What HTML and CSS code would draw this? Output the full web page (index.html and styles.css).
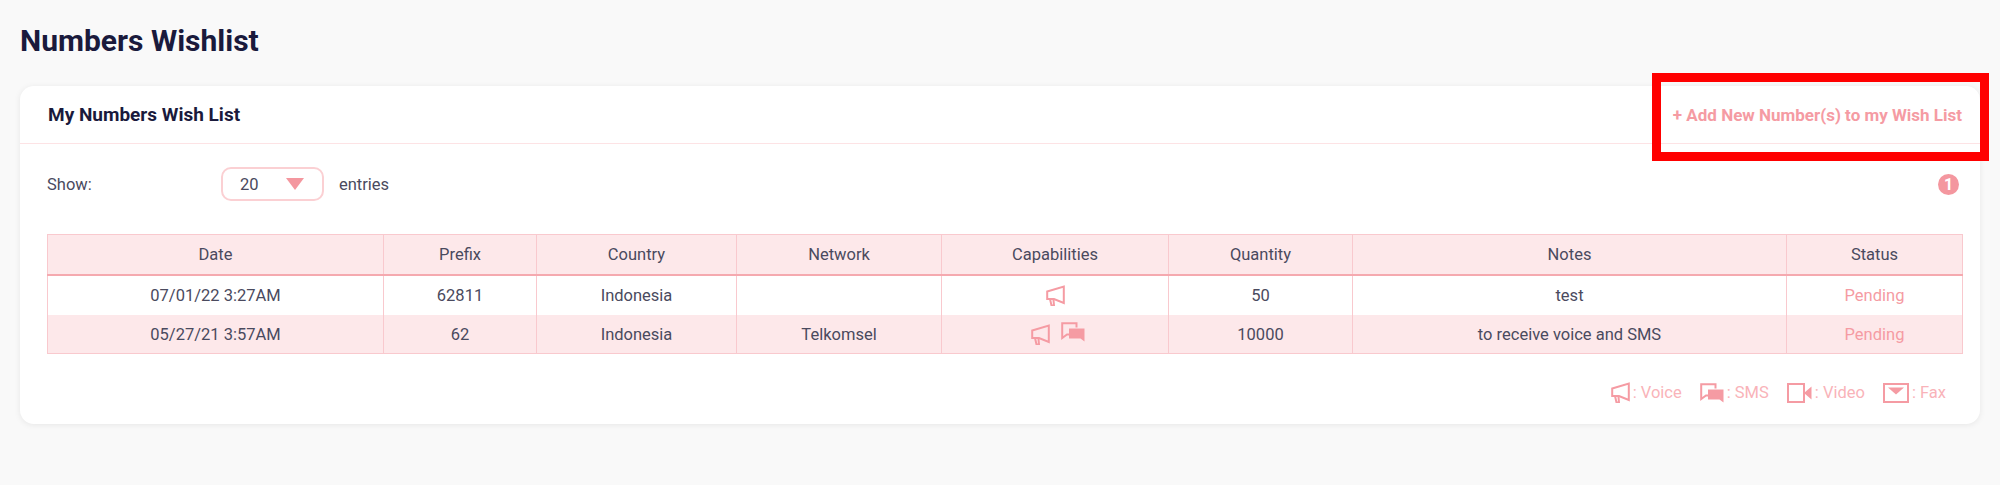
FILE: index.html
```html
<!DOCTYPE html>
<html lang="en">
<head>
  <meta charset="UTF-8" />
  <title>Numbers Wishlist</title>
  <link rel="stylesheet" href="styles.css">
</head>
<body>
  <svg class="icon-defs" width="0" height="0">
    <symbol id="i-voice" viewBox="0 0 19 21">
      <path d="M1.2 6.5 L17.8 1.5 V18 L8 14 H1.2 Z" fill="none" stroke="currentColor" stroke-width="2"/>
      <path d="M4 14 L5.5 20.5 H8 L7.5 15" fill="none" stroke="currentColor" stroke-width="2"/>
    </symbol>
    <symbol id="i-sms" viewBox="0 0 24 20">
      <path d="M15.5 5.5 V1.2 H1.2 V16 L6 12.5 H8" fill="none" stroke="currentColor" stroke-width="2"/>
      <path d="M8 6.5 H23.5 V19.5 L19.5 16.5 H8 Z" fill="currentColor"/>
    </symbol>
    <symbol id="i-video" viewBox="0 0 25 20">
      <rect x="1" y="1" width="16" height="18" fill="none" stroke="currentColor" stroke-width="2"/>
      <path d="M17 10 L24.5 3.5 V16.5 Z" fill="currentColor"/>
    </symbol>
    <symbol id="i-fax" viewBox="0 0 26 20">
      <rect x="1" y="1" width="24" height="18" fill="none" stroke="currentColor" stroke-width="2"/>
      <path d="M5 4.5 H21 L13 11.5 Z" fill="currentColor"/>
    </symbol>
  </svg>

  <h1 class="page-title">Numbers Wishlist</h1>

  <div class="card">
    <div class="card-head">
      <h2>My Numbers Wish List</h2>
      <a class="add-link" href="#">+ Add New Number(s) to my Wish List</a>
    </div>

    <div class="card-body">
      <div class="toolbar">
        <span class="show-label">Show:</span>
        <div class="select"><span>20</span><i class="caret"></i></div>
        <span class="entries">entries</span>
        <span class="page-badge">1</span>
      </div>

      <table class="wish-table">
        <colgroup>
          <col class="c-date"><col class="c-prefix"><col class="c-country"><col class="c-network">
          <col class="c-caps"><col class="c-qty"><col class="c-notes"><col class="c-status">
        </colgroup>
        <thead>
          <tr>
            <th>Date</th><th>Prefix</th><th>Country</th><th>Network</th>
            <th>Capabilities</th><th>Quantity</th><th>Notes</th><th>Status</th>
          </tr>
        </thead>
        <tbody>
          <tr>
            <td>07/01/22 3:27AM</td><td>62811</td><td>Indonesia</td><td></td>
            <td class="caps"><svg class="ic ic-voice"><use href="#i-voice"/></svg></td>
            <td>50</td><td>test</td><td class="status">Pending</td>
          </tr>
          <tr>
            <td>05/27/21 3:57AM</td><td>62</td><td>Indonesia</td><td>Telkomsel</td>
            <td class="caps"><svg class="ic ic-voice"><use href="#i-voice"/></svg><svg class="ic ic-sms"><use href="#i-sms"/></svg></td>
            <td>10000</td><td>to receive voice and SMS</td><td class="status">Pending</td>
          </tr>
        </tbody>
      </table>

      <div class="legend">
        <span class="legend-item"><svg class="ic ic-voice"><use href="#i-voice"/></svg>: Voice</span>
        <span class="legend-item"><svg class="ic ic-sms"><use href="#i-sms"/></svg>: SMS</span>
        <span class="legend-item"><svg class="ic ic-video"><use href="#i-video"/></svg>: Video</span>
        <span class="legend-item"><svg class="ic ic-fax"><use href="#i-fax"/></svg>: Fax</span>
      </div>
    </div>

    <div class="highlight"></div>
  </div>
</body>
</html>
```

FILE: styles.css
```css
body {
  margin: 0;
  height: 485px;
  overflow: hidden;
  background: #f9f9f9;
  font-family: Roboto, 'Noto Sans', sans-serif;
  font-size: 16.5px;
  color: #4a4a5e;
}

.icon-defs {
  position: absolute;
}

.page-title {
  margin: 0;
  padding: 23px 20px 0;
  height: 64px;
  box-sizing: border-box;
  font-size: 30px;
  line-height: 36px;
  font-weight: 700;
  color: #1a1a3c;
}

.card {
  position: relative;
  margin: 22px 20px 0;
  height: 338px;
  background: #fff;
  border-radius: 14px;
  box-shadow: 0 1px 6px rgba(0, 0, 0, 0.08);
}

.card-head {
  height: 58px;
  box-sizing: border-box;
  padding: 0 18px 0 28px;
  display: flex;
  align-items: center;
  justify-content: space-between;
  border-bottom: 1px solid #fde3e5;
}

.card-head h2 {
  margin: 0;
  font-size: 19px;
  font-weight: 700;
  color: #1a1a3c;
}

.add-link {
  font-size: 17px;
  font-weight: 700;
  color: #f59ba3;
  text-decoration: none;
}

.card-body {
  padding: 23px 17px 0 27px;
}

.toolbar {
  height: 34px;
  display: flex;
  align-items: center;
}

.show-label {
  width: 174px;
}

.select {
  width: 103px;
  height: 34px;
  box-sizing: border-box;
  padding: 0 18px 0 17px;
  display: flex;
  align-items: center;
  justify-content: space-between;
  border: 2px solid #fbd0d3;
  border-radius: 10px;
}

.caret {
  width: 0;
  height: 0;
  border-left: 9px solid transparent;
  border-right: 9px solid transparent;
  border-top: 12px solid #f4979f;
}

.entries {
  margin-left: 15px;
}

.page-badge {
  margin-left: auto;
  margin-right: 4px;
  width: 21px;
  height: 21px;
  border-radius: 50%;
  background: #f4979f;
  color: #fff;
  font-size: 16px;
  font-weight: 700;
  line-height: 21px;
  text-align: center;
}

.wish-table {
  margin-top: 33px;
  width: 1915px;
  table-layout: fixed;
  border-collapse: collapse;
  text-align: center;
}

.c-date { width: 336px; }
.c-prefix { width: 153px; }
.c-country { width: 200px; }
.c-network { width: 205px; }
.c-caps { width: 227px; }
.c-qty { width: 184px; }
.c-notes { width: 434px; }
.c-status { width: 176px; }

.wish-table th,
.wish-table td {
  border: 1px solid #f9c9ce;
  font-weight: 400;
  padding: 0;
}

.wish-table th {
  height: 39px;
  background: #fde8ea;
  border-bottom: 2px solid #f5a9af;
}

.wish-table td {
  height: 38px;
}

.wish-table tbody tr:nth-child(even) td {
  background: #fde8ea;
}

.wish-table tbody td {
  border-top-color: transparent;
  border-bottom-color: transparent;
}

.wish-table tbody tr:last-child td {
  border-bottom-color: #f9c9ce;
}

.wish-table .status {
  color: #f59ba3;
}

.ic {
  color: #f59ba3;
  vertical-align: middle;
}

.ic-voice { width: 19px; height: 21px; }
.ic-sms { width: 24px; height: 20px; }
.ic-video { width: 25px; height: 20px; }
.ic-fax { width: 26px; height: 20px; }

.caps .ic-sms {
  margin: -4px -5px 0 11px;
}

.legend {
  margin-top: 28px;
  padding-right: 17px;
  display: flex;
  justify-content: flex-end;
  gap: 18px;
}

.legend-item {
  display: flex;
  align-items: center;
  gap: 3px;
  color: #f9b3b9;
}

.highlight {
  position: absolute;
  left: 1632px;
  top: -13px;
  width: 319px;
  height: 70px;
  border: 9px solid #ff0000;
}
```
